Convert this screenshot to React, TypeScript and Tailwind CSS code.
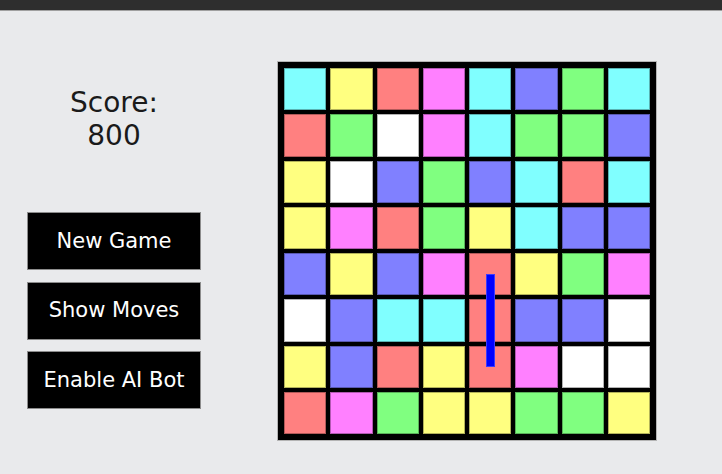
import React from "react";

// board colours, one letter per cell
const COLORS: Record<string, string> = {
  c: "bg-[#80ffff]",
  y: "bg-[#ffff80]",
  r: "bg-[#ff8080]",
  m: "bg-[#ff80ff]",
  b: "bg-[#8080ff]",
  g: "bg-[#80ff80]",
  w: "bg-[#ffffff]",
};

const BOARD = [
  "cyrmcbgc",
  "rgwmcggb",
  "ywbgbcrc",
  "ymrgycbb",
  "bybmrygm",
  "wbccrbbw",
  "ybryrmww",
  "rmgyyggy",
];

function Board() {
  return (
    <div className="relative w-[380px] h-[380px] border border-[#b4b4b4] bg-black p-[6px]">
      <div className="grid grid-cols-8 grid-rows-8 gap-[4px] w-[366px] h-[366px]">
        {BOARD.flatMap((row, r) =>
          row.split("").map((k, c) => (
            <div key={`${r}-${c}`} className={`${COLORS[k]} border border-black/30`} />
          ))
        )}
      </div>
      {/* hint line for a possible move */}
      <div className="absolute left-[208px] top-[212px] w-[9px] h-[93px] bg-[#0000ff] border border-[#3a3aff]" />
    </div>
  );
}

function GameButton({ label }: { label: string }) {
  return (
    <button className="w-[174px] h-[58px] bg-black border border-[#8c8c8c] text-white text-[21px] leading-none">
      {label}
    </button>
  );
}

export default function App() {
  return (
    <div
      className="min-h-screen w-full bg-[#e9eaec]"
      style={{ fontFamily: '"DejaVu Sans", Verdana, sans-serif' }}
    >
      <div className="h-[11px] bg-[#2e2e2e] border-b border-[#a0a0a0]" />
      <div className="flex items-start pt-[50px] pl-[27px] gap-[76px]">
        <div className="flex flex-col w-[174px] pt-[25px]">
          <div className="text-center text-[28px] leading-[33px] text-[#1a1a1a]">
            <div>Score:</div>
            <div>800</div>
          </div>
          <div className="flex flex-col gap-[11.7px] mt-[60px]">
            <GameButton label="New Game" />
            <GameButton label="Show Moves" />
            <GameButton label="Enable AI Bot" />
          </div>
        </div>
        <Board />
      </div>
    </div>
  );
}
